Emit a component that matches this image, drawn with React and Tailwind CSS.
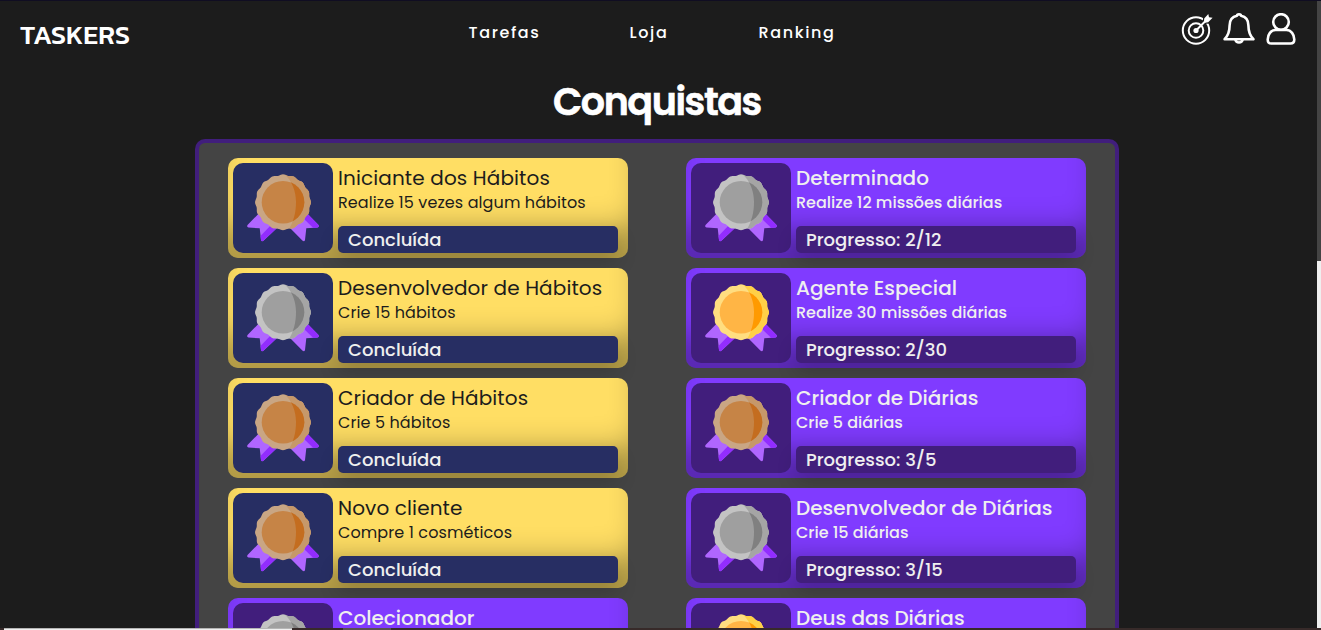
import React from "react";

const MEDAL = {
  bronze: { rimL: "#c9a684", rimR: "#c6986a", discL: "#c68446", discR: "#c46d1f" },
  silver: { rimL: "#c3c3c3", rimR: "#a5a5a5", discL: "#9f9f9f", discR: "#808080" },
  gold: { rimL: "#ffdd80", rimR: "#ffd047", discL: "#ffb545", discR: "#ff9a00" },
};

// Scalloped rim: 16 shallow waves around (36, 28)
const rimPath = (() => {
  const n = 16;
  const steps = n * 10;
  let d = "";
  for (let i = 0; i < steps; i++) {
    const t = (i * 2 * Math.PI) / steps;
    const r = 27.4 + 0.55 * Math.cos(n * t);
    d += `${i ? "L" : "M"}${(36 + Math.sin(t) * r).toFixed(2)} ${(28.3 - Math.cos(t) * r).toFixed(2)}`;
  }
  return d + "Z";
})();

function Medal({ kind }) {
  const c = MEDAL[kind];
  return (
    <svg width="72" height="68" viewBox="0 0 72 68" className="block">
      <path d="M11.3 40 .5 51Q-.5 53.2 1.5 53.6L12.7 54.3 14 66Q14.6 68 16.4 66.8L30 54V40Z" fill="#b066ff" />
      <path d="M25 50 13.5 62 14 66Q14.6 68 16.4 66.8L30 54Z" fill="#922dff" />
      <path d="M60.7 40 71.5 51Q72.5 53.2 70.5 53.6L59.3 54.3 58 66Q57.4 68 55.6 66.8L43 54V40Z" fill="#b066ff" />
      <path d="M60.7 40 71.5 51Q72.5 53.2 70.5 53.6L66.3 53.9 55.5 43.5Z" fill="#922dff" />
      <path d={rimPath} fill={c.rimL} />
      <clipPath id={`half-${kind}`}>
        <path d="M36 -1C45 6 49 17 49 28 49 38 47 47 41 57H72V-1Z" />
      </clipPath>
      <path d={rimPath} fill={c.rimR} clipPath={`url(#half-${kind})`} />
      <circle cx="36" cy="28.2" r="21.3" fill={c.discL} />
      <circle cx="36" cy="28.2" r="21.3" fill={c.discR} clipPath={`url(#half-${kind})`} />
    </svg>
  );
}

const LEFT = [
  { done: true, medal: "bronze", title: "Iniciante dos Hábitos", text: "Realize 15 vezes algum hábitos", status: "Concluída" },
  { done: true, medal: "silver", title: "Desenvolvedor de Hábitos", text: "Crie 15 hábitos", status: "Concluída" },
  { done: true, medal: "bronze", title: "Criador de Hábitos", text: "Crie 5 hábitos", status: "Concluída" },
  { done: true, medal: "bronze", title: "Novo cliente", text: "Compre 1 cosméticos", status: "Concluída" },
  { medal: "silver", title: "Colecionador" },
];
const RIGHT = [
  { medal: "silver", title: "Determinado", text: "Realize 12 missões diárias", status: "Progresso: 2/12" },
  { medal: "gold", title: "Agente Especial", text: "Realize 30 missões diárias", status: "Progresso: 2/30" },
  { medal: "bronze", title: "Criador de Diárias", text: "Crie 5 diárias", status: "Progresso: 3/5" },
  { medal: "silver", title: "Desenvolvedor de Diárias", text: "Crie 15 diárias", status: "Progresso: 3/15" },
  { medal: "gold", title: "Deus das Diárias" },
];

function Card({ done, medal, title, text, status }) {
  return (
    <article
      className={`flex h-[100px] w-[400px] shrink-0 gap-[5px] rounded-[10px] p-[5px] shadow-[inset_0_-42px_30px_-12px_rgba(0,0,0,0.3)] ${
        done ? "bg-[#ffde64] text-[#1c1c1c]" : "bg-[#803bff] text-[#efefef]"
      }`}
    >
      <div className={`flex h-[90px] w-[100px] justify-center rounded-[10px] pt-[11px] ${done ? "bg-[#272e63]" : "bg-[#411e7c]"}`}>
        <Medal kind={medal} />
      </div>
      <div className="flex w-[280px] flex-col justify-between whitespace-nowrap">
        <div>
          <h2 className={`h-[28px] text-[20px] leading-[30px] ${done ? "font-normal tracking-[0.12px]" : "font-medium"}`}>{title}</h2>
          <p className={`text-[16px] leading-[24px] ${done ? "font-normal tracking-[0.1px]" : "font-medium"}`}>{text}</p>
        </div>
        <div
          className={`h-[27px] rounded-[5px] px-[10px] text-[18px] leading-[27px] font-medium text-[#efefef] shadow-[0_10px_20px_rgba(0,0,0,0.16)] ${
            done ? "bg-[#272e63]" : "bg-[#411e7c]"
          }`}
        >
          {status}
        </div>
      </div>
    </article>
  );
}

function TargetIcon() {
  return (
    <svg width="32" height="32" viewBox="0 0 32 32" fill="none" stroke="#fff" className="block">
      <circle cx="15" cy="17.5" r="13.2" strokeWidth="2" />
      <circle cx="15" cy="17.5" r="7.3" strokeWidth="2" />
      <circle cx="15" cy="17.5" r="2.6" fill="#fff" stroke="none" />
      <path d="M23 8.5 23.2 5.5 27.3 1 28 4.2 31.6 4.8 27.2 9.3 24 9.8Z" fill="#fff" stroke="#1c1c1c" strokeWidth="2.4" paintOrder="stroke" />
      <path d="M15 17.5 26 6.5" strokeWidth="2" />
    </svg>
  );
}

function BellIcon() {
  return (
    <svg width="32" height="32" viewBox="0 0 32 32" fill="none" stroke="#fff" strokeWidth="2.6" strokeLinejoin="round" className="block">
      <path d="M14 2.8Q14 1.4 16 1.4T18 2.8C23 3.8 25.4 7.5 25.4 12.5 25.4 19.5 27.3 23 30.4 26.2H1.6C4.7 23 6.6 19.5 6.6 12.5 6.6 7.5 9 3.8 14 2.8Z" />
      <path d="M12.3 26.5A3.8 3.9 0 0 0 19.7 26.5" />
    </svg>
  );
}

function UserIcon() {
  return (
    <svg width="32" height="32" viewBox="0 0 32 32" fill="none" stroke="#fff" strokeWidth="2.6" className="block">
      <circle cx="16" cy="9" r="7.8" />
      <path d="M10.5 17H21.5C26 17 29.3 21.5 29.3 26.5 29.3 29.3 28.2 30.5 25.5 30.5H6.5C3.8 30.5 2.7 29.3 2.7 26.5 2.7 21.5 6 17 10.5 17Z" />
    </svg>
  );
}

export default function App() {
  return (
    <div className="flex h-[630px] w-[1321px] flex-col overflow-hidden bg-[#1c1c1c] font-[Poppins,Inter,sans-serif] text-white">
      <div className="h-px shrink-0 bg-[#100d22]" />
      <div className="flex h-[627px] shrink-0">
        <div className="flex min-w-0 flex-1 flex-col overflow-hidden">
          <header className="flex h-[63px] shrink-0 items-start">
            <div className="w-[468.6px] pt-[16px] pl-[20px] font-[Kanit,Inter,sans-serif] text-[27px] leading-[36px] font-medium">TASKERS</div>
            <nav className="flex flex-1 pt-[20px] text-[16px] leading-[24px] font-medium whitespace-nowrap">
              <a className="w-[161px] tracking-[1.6px]">Tarefas</a>
              <a className="w-[129px] tracking-[1.6px]">Loja</a>
              <a className="tracking-[1.6px]">Ranking</a>
            </nav>
            <div className="flex gap-[10px] pt-[12px] pr-[20px]">
              <TargetIcon />
              <BellIcon />
              <UserIcon />
            </div>
          </header>
          <h1 className="ml-[553px] h-[75px] shrink-0 pt-[8px] text-[38px] leading-[60px] font-semibold tracking-[-1.4px] whitespace-nowrap [-webkit-text-stroke:0.6px_white]">Conquistas</h1>
          <main className="ml-[195px] flex w-[924px] shrink-0 gap-[58px] rounded-t-[10px] border-4 border-b-0 border-[#411e7c] bg-[#444444] pt-[15px] pl-[29px]">
            {[LEFT, RIGHT].map((items, i) => (
              <section key={i} className="flex h-[490px] flex-col gap-[10px]">
                {items.map((a) => (
                  <Card key={a.title} {...a} />
                ))}
              </section>
            ))}
          </main>
        </div>
        <div className="w-1 shrink-0 bg-[#efefef]">
          <div className="h-[260px] bg-[#444444]" />
        </div>
      </div>
      <div className="flex h-[2px] shrink-0 bg-[#372a29] pl-1">
        <div className="w-[288px] border-t border-[#b5b5b5] bg-[#efefef]" />
        <div className="ml-[51px] w-[48px] bg-[#5a5050]" />
      </div>
    </div>
  );
}
